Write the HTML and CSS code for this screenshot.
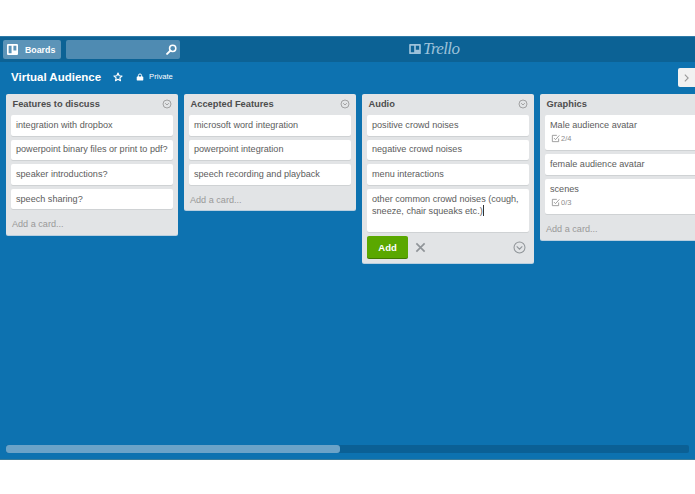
FILE: index.html
```html
<!DOCTYPE html>
<html lang="en">
<head>
<meta charset="utf-8">
<title>Virtual Audience</title>
<link rel="stylesheet" href="styles.css">
</head>
<body>
<div class="page">
  <header class="topbar">
    <a class="boards-btn">
      <svg class="boards-icon" viewBox="0 0 12 12"><path fill-rule="evenodd" d="M1.2 0h9.6A1.2 1.2 0 0 1 12 1.2v9.6a1.2 1.2 0 0 1-1.2 1.2H1.2A1.2 1.2 0 0 1 0 10.800V1.200A1.200 1.200 0 0 1 1.200 0zM1.800 1.800v8.200h3.200V1.800zM7 1.800v5.200h3.200V1.800z"/></svg>
      <span>Boards</span>
    </a>
    <div class="search">
      <svg class="search-icon" viewBox="0 0 12 12"><circle cx="7.300" cy="4.700" r="3.400" fill="none" stroke="#fff" stroke-width="1.700"/><path d="M4.800 7.200 1.200 10.800" stroke="#fff" stroke-width="2.200" stroke-linecap="round"/></svg>
    </div>
    <div class="logo">
      <svg class="logo-icon" viewBox="0 0 14 12"><path fill-rule="evenodd" d="M1 0h12a1 1 0 0 1 1 1v10a1 1 0 0 1-1 1H1a1 1 0 0 1-1-1V1a1 1 0 0 1 1-1zM2 2v8h4V2zM8 2v5h4V2z"/></svg>
      <span class="logo-text">Trello</span>
    </div>
  </header>
  <main class="board">
    <div class="board-head">
      <h1 class="board-title">Virtual Audience</h1>
      <svg class="star" viewBox="0 0 12 12"><path d="M6 1.300 7.400 4.500 10.800 4.800 8.200 7 9 10.400 6 8.600 3 10.400 3.800 7 1.200 4.800 4.600 4.500z" fill="none" stroke="#fff" stroke-width="1.400" stroke-linejoin="round"/></svg>
      <svg class="lock" viewBox="0 0 10 10"><path d="M1.500 4.500h7a.6.6 0 0 1 .6.6v3.800a.6.6 0 0 1-.6.6h-7a.6.6 0 0 1-.6-.6V5.100a.6.6 0 0 1 .6-.6z" fill="#fff"/><path d="M3 5V3.200a2 2 0 0 1 4 0V5" fill="none" stroke="#fff" stroke-width="1.200"/></svg>
      <span class="privacy">Private</span>
    </div>
    <a class="sidebar-toggle">
      <svg viewBox="0 0 8 12"><path d="M2 2 6 6 2 10" fill="none" stroke="#999" stroke-width="1.300"/></svg>
    </a>
    <div class="lists">
      <section class="list">
        <div class="list-head"><h2>Features to discuss</h2><svg class="menu" viewBox="0 0 12 12"><circle cx="6" cy="6" r="4.800"/><path d="M3.800 5 6 7.200 8.200 5"/></svg></div>
        <div class="card">integration with dropbox</div>
        <div class="card">powerpoint binary files or print to pdf?</div>
        <div class="card">speaker introductions?</div>
        <div class="card">speech sharing?</div>
        <div class="add-card">Add a card...</div>
      </section>
      <section class="list">
        <div class="list-head"><h2>Accepted Features</h2><svg class="menu" viewBox="0 0 12 12"><circle cx="6" cy="6" r="4.800"/><path d="M3.800 5 6 7.200 8.200 5"/></svg></div>
        <div class="card">microsoft word integration</div>
        <div class="card">powerpoint integration</div>
        <div class="card">speech recording and playback</div>
        <div class="add-card">Add a card...</div>
      </section>
      <section class="list">
        <div class="list-head"><h2>Audio</h2><svg class="menu" viewBox="0 0 12 12"><circle cx="6" cy="6" r="4.800"/><path d="M3.800 5 6 7.200 8.200 5"/></svg></div>
        <div class="card">positive crowd noises</div>
        <div class="card">negative crowd noises</div>
        <div class="card">menu interactions</div>
        <div class="card composer">other common crowd noises (cough, sneeze, chair squeaks etc.)<span class="caret"></span></div>
        <div class="composer-controls">
          <button class="add-btn">Add</button>
          <svg class="close" viewBox="0 0 12 12"><path d="M1.500 1.500 10.500 10.500M10.500 1.500 1.500 10.500"/></svg>
          <svg class="options" viewBox="0 0 14 14"><circle cx="7" cy="7" r="5.900"/><path d="M4 5.800 7 8.800 10 5.800"/></svg>
        </div>
      </section>
      <section class="list">
        <div class="list-head"><h2>Graphics</h2></div>
        <div class="card">Male audience avatar
          <div class="badge"><svg viewBox="0 0 10 10"><path d="M8.500 5v3.500h-7v-7h5"/><path d="M3.300 4.500 5 6.300 9.300 1.500"/></svg>2/4</div>
        </div>
        <div class="card">female audience avatar</div>
        <div class="card">scenes
          <div class="badge"><svg viewBox="0 0 10 10"><path d="M8.500 5v3.500h-7v-7h5"/><path d="M3.300 4.500 5 6.300 9.300 1.500"/></svg>0/3</div>
        </div>
        <div class="add-card">Add a card...</div>
      </section>
    </div>
    <div class="scrollbar"><div class="thumb"></div></div>
  </main>
</div>
</body>
</html>
```
FILE: styles.css
```css
* { box-sizing: border-box; }
html, body { margin: 0; height: 100%; background: #fff; }
body { font-family: "Liberation Sans", Arial, sans-serif; overflow: hidden; }
.page { height: 494px; padding: 36px 0 34px; display: flex; flex-direction: column; }

.topbar {
  height: 26px; flex: none; background: #0c6295; display: flex; align-items: center;
  padding: 3px 0 3px 3px; position: relative; border-top: 1px solid #2f7ba8;
}
.boards-btn {
  width: 58px; height: 19px; border-radius: 2px; background: #5c94b8; color: #fff;
  display: flex; align-items: center; padding-left: 4px; gap: 7px;
  font-size: 8.800px; font-weight: 700;
}
.boards-icon { width: 11px; height: 11px; fill: #fff; }
.search {
  width: 114px; height: 19px; margin-left: 5px; border-radius: 2px; background: #4f8bb2;
  display: flex; align-items: center; justify-content: flex-end; padding-right: 3px;
}
.search-icon { width: 11px; height: 11px; }
.logo {
  position: absolute; left: 409px; top: 3px; display: flex; align-items: center; gap: 2px;
  color: #9dc2da; height: 18px;
}
.logo-icon { width: 12px; height: 10px; fill: #9dc2da; }
.logo-text { font: italic 400 17px "Liberation Serif", serif; letter-spacing: -.6px; }

.board { flex: 1; min-height: 0; background: #0d72b0; position: relative; overflow: hidden; display: flex; flex-direction: column; border-bottom: 1px solid #3a7c9c; }
.board-head { height: 31.500px; flex: none; display: flex; align-items: center; padding: 0 0 2px 11px; color: #fff; }
.board-title { margin: 0; font-size: 11.500px; font-weight: 700; }
.star { width: 10px; height: 10px; margin-left: 12px; }
.lock { width: 8px; height: 8px; margin-left: 13px; }
.privacy { font-size: 7.600px; margin-left: 5px; }
.sidebar-toggle {
  position: absolute; right: 0; top: 6px; width: 17px; height: 19px; background: #f1f1f1;
  border-radius: 2px 0 0 2px; display: flex; align-items: center; justify-content: center;
}
.sidebar-toggle svg { width: 7px; height: 10px; }

.lists { display: flex; align-items: flex-start; gap: 6px; padding-left: 6px; flex: 1; min-height: 0; }
.list {
  width: 172px; flex: none; background: #e2e4e6; border-radius: 2px; padding: 0 5px;
  color: #4d4d4d; box-shadow: 0 1px 0 #b9cfdf;
}
.list-head { height: 21.500px; display: flex; align-items: center; justify-content: space-between; padding: 0 1px 0 1.500px; }
.list-head h2 { margin: 0; font-size: 9.300px; font-weight: 700; color: #4d4d4d; }
.menu { width: 10px; height: 10px; fill: none; stroke: #8c8c8c; stroke-width: .9; }
.card {
  background: #fff; border-radius: 2px; padding: 4.800px 5px; margin-bottom: 4px;
  font-size: 9.100px; line-height: 11px; color: #5c5c5c; box-shadow: 0 1px 0 #cfd2d4;
}
.add-card { font-size: 9.100px; line-height: 11px; color: #999; padding: 6px 1px 0; height: 21.600px; }
.composer { height: 43px; margin-bottom: 4px; }
.caret { display: inline-block; width: 1px; height: 11px; background: #333; vertical-align: -2px; }
.composer-controls { display: flex; align-items: center; height: 27px; padding-bottom: 4px; }
.add-btn {
  width: 41px; height: 22px; border: 0; border-radius: 2px; background: #5aa800; color: #fff;
  font: 700 9.500px "Liberation Sans", Arial, sans-serif; padding: 0;
  box-shadow: 0 1px 0 #3f7a00;
}
.close { width: 11px; height: 11px; margin-left: 7px; fill: none; stroke: #8f9498; stroke-width: 1.800; }
.options { width: 13px; height: 13px; margin-left: auto; margin-right: 3px; fill: none; stroke: #8f9498; stroke-width: 1.100; }
.badge { display: flex; align-items: center; gap: 1px; font-size: 7.500px; line-height: 10px; color: #8c8c8c; margin: 3.200px 0 1.600px 1px; }
.badge svg { width: 9px; height: 9px; fill: none; stroke: #8c8c8c; stroke-width: .9; }

.scrollbar { height: 8px; flex: none; margin: 0 6px 6px; background: #0b6095; border-radius: 2px; }
.thumb { width: 334px; height: 100%; background: #6ba3c8; border-radius: 3px; }
```
